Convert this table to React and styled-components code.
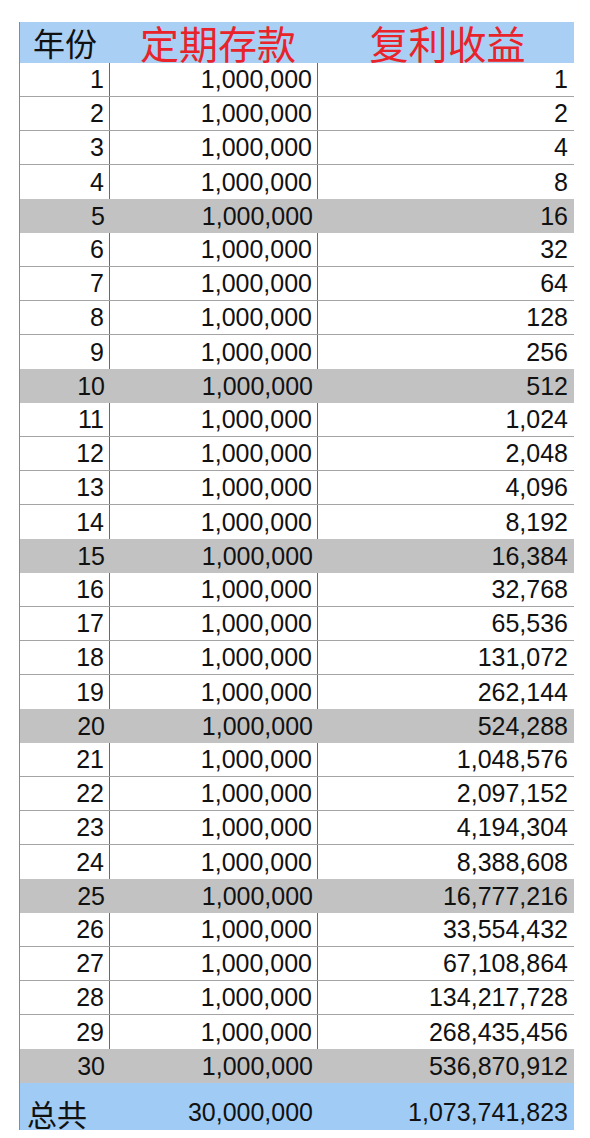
import React from 'react';
import styled, { createGlobalStyle } from 'styled-components';

const GlobalStyle = createGlobalStyle`
  html, body {
    margin: 0;
    padding: 0;
    background: #ffffff;
  }
  body {
    font-family: "Liberation Sans", "Noto Sans CJK SC", sans-serif;
  }
`

const Page = styled.div`
  width: 590px;
  height: 1138px;
  padding: 22px 0 0 19px;
  box-sizing: border-box;
  overflow: hidden;
`
const Table = styled.div`
  width: 554px;
  display: flex;
  flex-direction: column;
  border-left: 1px solid #8a8a8a;
`
const Row = styled.div`
  display: grid;
  grid-template-columns: 90px 208px 255px;
  height: ${p => p.$height}px;
  box-sizing: border-box;
  background: ${p => p.$bg};
  border-bottom: ${p => (p.$line ? '1px solid #a4a4a4' : 'none')};
`
const Cell = styled.div`
  display: flex;
  align-items: ${p => p.$valign || 'center'};
  justify-content: ${p => p.$align || 'flex-end'};
  padding: ${p => p.$pad || '0 5px 0 0'};
  box-sizing: border-box;
  border-right: ${p => (p.$divider ? '1px solid #6a6a6a' : 'none')};
  font-size: 25px;
  color: #111;
  white-space: nowrap;
  line-height: 1;
`
const HeadText = styled.span`
  font-family: "Noto Sans CJK SC", sans-serif;
  font-size: ${p => p.$size}px;
  color: ${p => p.$color};
  line-height: 1;
`

const rows = Array.from({ length: 30 }, (_, i) => ({
  year: i + 1,
  deposit: '1,000,000',
  compound: Math.pow(2, i).toLocaleString('en-US'),
}));

export default function App() {
  return (
    <Page>
      <GlobalStyle />
      <Table>
        <Row $height={41} $bg="#a9cff4">
          <Cell $align="center" $pad="0 0 2px 0">
            <HeadText $size={32} $color="#111">年份</HeadText>
          </Cell>
          <Cell $align="center" $pad="0 0 0 8px">
            <HeadText $size={39} $color="#e8232a">定期存款</HeadText>
          </Cell>
          <Cell $align="center" $pad="0 0 0 4px">
            <HeadText $size={39} $color="#e8232a">复利收益</HeadText>
          </Cell>
        </Row>
        {rows.map(r => {
          const shaded = r.year % 5 === 0;
          return (
            <Row
              key={r.year}
              $height={34}
              $bg={shaded ? '#c2c2c2' : '#ffffff'}
              $line={!shaded && r.year % 5 !== 4}
            >
              <Cell $divider={!shaded}>{r.year}</Cell>
              <Cell $divider={!shaded}>{r.deposit}</Cell>
              <Cell>{r.compound}</Cell>
            </Row>
          );
        })}
        <Row $height={47} $bg="#9fcbf4">
          <Cell $align="flex-start" $valign="flex-end" $pad="0 0 2px 7px">
            <HeadText $size={30} $color="#111">总共</HeadText>
          </Cell>
          <Cell $valign="flex-end" $pad="0 5px 5px 0">30,000,000</Cell>
          <Cell $valign="flex-end" $pad="0 5px 5px 0">1,073,741,823</Cell>
        </Row>
      </Table>
    </Page>
  );
}
